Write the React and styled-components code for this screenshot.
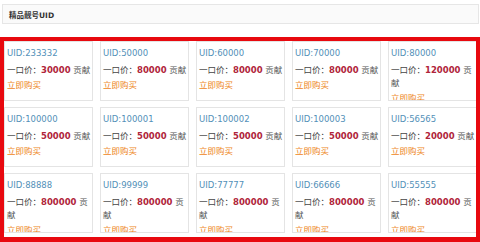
import React from "react";
import styled, { createGlobalStyle } from "styled-components";

const Global = createGlobalStyle`
  html, body { margin: 0; padding: 0; background: #ffffff; }
  body { font-family: "DejaVu Sans", "Noto Sans CJK SC", sans-serif; }
  #root { width: 480px; height: 242px; overflow: hidden; }
`;

const Page = styled.div`
  width: 480px;
  height: 242px;
  display: flex;
  flex-direction: column;
`;

const Header = styled.div`
  margin: 4px 1px 0 2px;
  height: 20px;
  box-sizing: border-box;
  border: 1px solid #e6e6e6;
  background: #fafafa;
  display: flex;
  align-items: center;
  padding-left: 6px;
  font-size: 7.5px;
  font-weight: bold;
  color: #333;
`;

const Frame = styled.div`
  margin-top: 13px;
  width: 480px;
  box-sizing: border-box;
  border: 4px solid #e8090f;
  border-bottom-width: 5px;
  padding-bottom: 4px;
  overflow: hidden;
`;

const Grid = styled.div`
  display: grid;
  grid-template-columns: repeat(5, 89px);
  grid-auto-rows: 60px;
  column-gap: 7px;
  row-gap: 6px;
`;

const Card = styled.div`
  box-sizing: border-box;
  border: 1px solid #e4e4e4;
  background: #fff;
  padding: 5px 0 0 2px;
  overflow: hidden;
  font-size: 8.5px;
  line-height: 13px;
`;

const Uid = styled.div`
  color: #5290b8;
`;

const Price = styled.div`
  margin-top: 4px;
  color: #444;
`;

const Amount = styled.b`
  color: #b0243a;
  font-weight: bold;
`;

const Unit = styled.span`
  color: #555;
`;

const Buy = styled.a`
  display: block;
  margin-top: 2px;
  color: #ee8519;
  text-decoration: none;
  cursor: pointer;
`;

const items = [
  ["233332", "30000"],
  ["50000", "80000"],
  ["60000", "80000"],
  ["70000", "80000"],
  ["80000", "120000"],
  ["100000", "50000"],
  ["100001", "50000"],
  ["100002", "50000"],
  ["100003", "50000"],
  ["56565", "20000"],
  ["88888", "800000"],
  ["99999", "800000"],
  ["77777", "800000"],
  ["66666", "800000"],
  ["55555", "800000"],
];

export default function App() {
  return (
    <Page>
      <Global />
      <Header>精品靓号UID</Header>
      <Frame>
        <Grid>
          {items.map(([uid, price]) => (
            <Card key={uid}>
              <Uid>UID:{uid}</Uid>
              <Price>
                一口价：<Amount>{price}</Amount> <Unit>贡献</Unit>
              </Price>
              <Buy>立即购买</Buy>
            </Card>
          ))}
        </Grid>
      </Frame>
    </Page>
  );
}
